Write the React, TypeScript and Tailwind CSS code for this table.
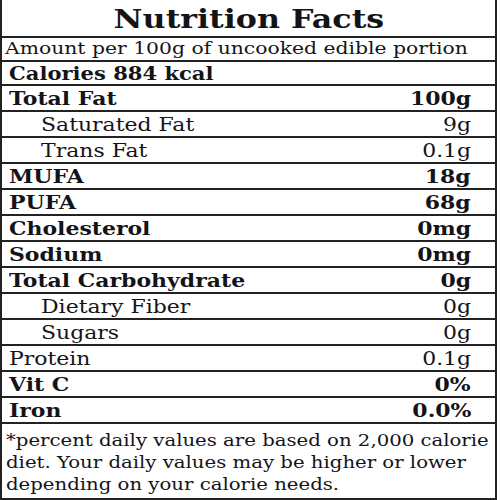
import React from "react";

type Row = { label: string; value: string; bold?: boolean; indent?: boolean };

const rows: Row[] = [
  { label: "Total Fat", value: "100g", bold: true },
  { label: "Saturated Fat", value: "9g", indent: true },
  { label: "Trans Fat", value: "0.1g", indent: true },
  { label: "MUFA", value: "18g", bold: true },
  { label: "PUFA", value: "68g", bold: true },
  { label: "Cholesterol", value: "0mg", bold: true },
  { label: "Sodium", value: "0mg", bold: true },
  { label: "Total Carbohydrate", value: "0g", bold: true },
  { label: "Dietary Fiber", value: "0g", indent: true },
  { label: "Sugars", value: "0g", indent: true },
  { label: "Protein", value: "0.1g" },
  { label: "Vit C", value: "0%", bold: true },
  { label: "Iron", value: "0.0%", bold: true },
];

const App: React.FC = () => {
  return (
    <div className="w-[500px] h-[500px] overflow-hidden bg-white text-[#141418] font-['DejaVu_Serif',serif]">
      <div className="w-[497px] border-x-2 border-b-2 border-[#222]">
        <h1 className="h-[38px] border-b-2 border-[#222] flex items-center justify-center text-[26px] font-bold leading-none pt-[2px]">
          <span className="inline-block scale-x-[1.22]">Nutrition Facts</span>
        </h1>
        <div className="h-[24px] border-b-2 border-[#222] flex items-center px-[3px] text-[16px] whitespace-nowrap overflow-hidden">
          <span className="inline-block origin-left scale-x-[1.27]">
            Amount per 100g of uncooked edible portion
          </span>
        </div>
        <div className="h-[24px] border-b-2 border-[#222] flex items-center px-[7px] text-[18px] font-bold">
          <span className="inline-block origin-left scale-x-[1.17]">
            Calories 884 kcal
          </span>
        </div>
        {rows.map((r) => (
          <div
            key={r.label}
            className={`h-[26px] border-b-2 border-[#222] flex items-center justify-between pr-[24px] text-[18px] ${
              r.bold ? "font-bold" : "font-normal"
            } ${r.indent ? "pl-[39px]" : "pl-[7px]"}`}
          >
            <span className="inline-block origin-left scale-x-[1.22]">
              {r.label}
            </span>
            <span className="inline-block origin-right scale-x-[1.22]">
              {r.value}
            </span>
          </div>
        ))}
        <div className="px-[4px] pt-[6px] pb-[2px] text-[16px] leading-[22px] whitespace-nowrap overflow-hidden">
          <span className="block origin-left scale-x-[1.23]">
            *percent daily values are based on 2,000 calorie
          </span>
          <span className="block origin-left scale-x-[1.23]">
            diet. Your daily values may be higher or lower
          </span>
          <span className="block origin-left scale-x-[1.23]">
            depending on your calorie needs.
          </span>
        </div>
      </div>
    </div>
  );
};

export default App;
